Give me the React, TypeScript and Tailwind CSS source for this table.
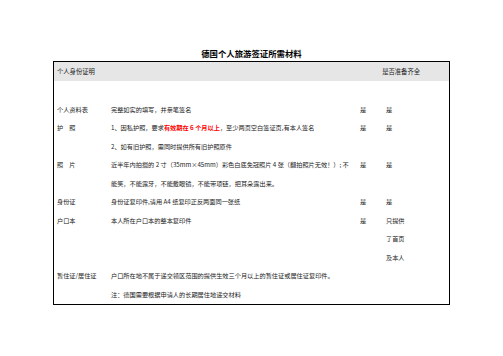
const rows: [string, React.ReactNode, string, string][] = [
  ["个人资料表", "完整如实的填写，并亲笔签名", "是", "是"],
  [
    "护　照",
    <>
      1、因私护照，要求
      <span className="font-bold text-[#ff0000]">有效期在 6 个月以上</span>
      ，至少两页空白签证页,有本人签名
    </>,
    "是",
    "是",
  ],
  ["", "2、如有旧护照，需同时提供所有旧护照原件", "", ""],
  ["照　片", "近半年内拍摄的 2 寸（35mm×45mm）彩色白底免冠照片 4 张（翻拍照片无效！）; 不", "是", "是"],
  ["", "能笑，不能露牙，不能戴眼镜，不能带项链，把耳朵露出来。", "", ""],
  ["身份证", "身份证复印件,请用 A4 纸复印正反两面同一张纸", "是", "是"],
  ["户口本", "本人所在户口本的整本复印件", "是", "只提供"],
  ["", "", "", "了首页"],
  ["", "", "", "及本人"],
  ["暂住证/居住证", "户口所在地不属于递交领区范围的提供生效三个月以上的暂住证或居住证复印件。", "", ""],
  ["", "注：德国需要根据申请人的长期居住地递交材料", "", ""],
];

export default function App() {
  return (
    <div
      className="h-[356px] w-[503px] bg-white pt-[47px] text-[#222]"
      style={{ fontFamily: '"Noto Sans CJK SC", "Noto Sans", sans-serif' }}
    >
      <h1 className="text-center text-[8.4px] font-bold leading-[12px] text-black">
        德国个人旅游签证所需材料
      </h1>
      <div className="mx-auto mt-[2px] w-[397px] border border-black">
        <div className="flex h-[19px] items-center justify-between bg-[#e6e6e6] pl-[3px] pr-[29px] text-[6.3px]">
          <span>个人身份证明</span>
          <span>是否准备齐全</span>
        </div>
        <div className="h-[19.5px]" />
        {rows.map(([label, desc, a, b], i) => (
          <div
            key={i}
            className="grid grid-cols-[54px_249px_26px_1fr] pl-[3px] text-[6.2px] leading-[18.5px] whitespace-nowrap"
          >
            <span>{label}</span>
            <span>{desc}</span>
            <span>{a}</span>
            <span>{b}</span>
          </div>
        ))}
      </div>
    </div>
  );
}
